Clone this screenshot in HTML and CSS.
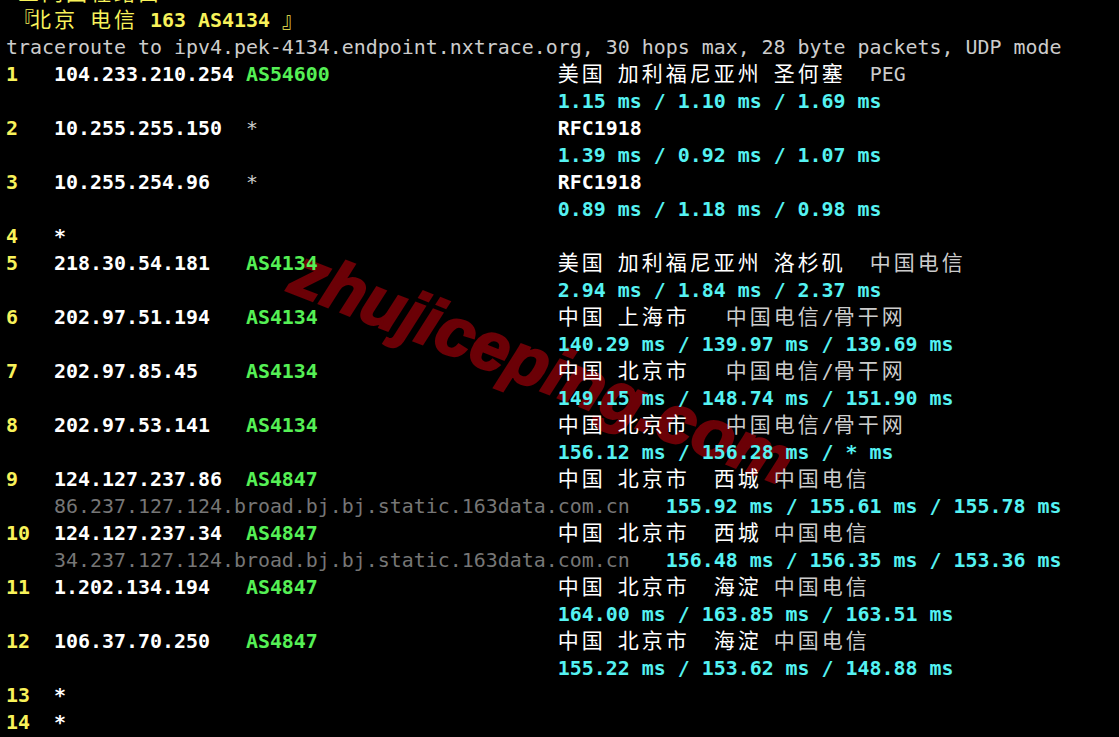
FILE: index.html
```html
<!DOCTYPE html>
<html lang="zh-CN">
<head>
<meta charset="utf-8">
<title>nexttrace</title>
<link rel="stylesheet" href="styles.css">
</head>
<body>
<div class="screen">
  <div class="mark">zhujiceping.com</div>
  <div class="term">
    <div class="ln"><span class="y"> <span class="z">三网回程路由</span></span></div>
    <div class="ln"><span class="y"><span class="z br">『</span><span class="z">北京</span> <span class="z">电信</span> 163 AS4134 <span class="z">』</span></span></div>
    <div class="ln"><span class="n">traceroute to ipv4.pek-4134.endpoint.nxtrace.org, 30 hops max, 28 byte packets, UDP mode</span></div>
    <div class="ln"><span class="y">1   </span><span class="w">104.233.210.254 </span><span class="g">AS54600</span>                   <span class="w"><span class="z">美国</span> <span class="z">加利福尼亚州</span> <span class="z">圣何塞</span></span><span class="n">  PEG</span></div>
    <div class="ln">                                              <span class="c">1.15 ms / 1.10 ms / 1.69 ms</span></div>
    <div class="ln"><span class="y">2   </span><span class="w">10.255.255.150  </span><span class="n">*</span>                         <span class="w">RFC1918</span></div>
    <div class="ln">                                              <span class="c">1.39 ms / 0.92 ms / 1.07 ms</span></div>
    <div class="ln"><span class="y">3   </span><span class="w">10.255.254.96   </span><span class="n">*</span>                         <span class="w">RFC1918</span></div>
    <div class="ln">                                              <span class="c">0.89 ms / 1.18 ms / 0.98 ms</span></div>
    <div class="ln"><span class="y">4   </span><span class="w">*</span></div>
    <div class="ln"><span class="y">5   </span><span class="w">218.30.54.181   </span><span class="g">AS4134</span>                    <span class="w"><span class="z">美国</span> <span class="z">加利福尼亚州</span> <span class="z">洛杉矶</span></span>  <span class="n"><span class="z">中国电信</span></span></div>
    <div class="ln">                                              <span class="c">2.94 ms / 1.84 ms / 2.37 ms</span></div>
    <div class="ln"><span class="y">6   </span><span class="w">202.97.51.194   </span><span class="g">AS4134</span>                    <span class="w"><span class="z">中国</span> <span class="z">上海市</span></span>   <span class="n"><span class="z">中国电信</span>/<span class="z">骨干网</span></span></div>
    <div class="ln">                                              <span class="c">140.29 ms / 139.97 ms / 139.69 ms</span></div>
    <div class="ln"><span class="y">7   </span><span class="w">202.97.85.45    </span><span class="g">AS4134</span>                    <span class="w"><span class="z">中国</span> <span class="z">北京市</span></span>   <span class="n"><span class="z">中国电信</span>/<span class="z">骨干网</span></span></div>
    <div class="ln">                                              <span class="c">149.15 ms / 148.74 ms / 151.90 ms</span></div>
    <div class="ln"><span class="y">8   </span><span class="w">202.97.53.141   </span><span class="g">AS4134</span>                    <span class="w"><span class="z">中国</span> <span class="z">北京市</span></span>   <span class="n"><span class="z">中国电信</span>/<span class="z">骨干网</span></span></div>
    <div class="ln">                                              <span class="c">156.12 ms / 156.28 ms / * ms</span></div>
    <div class="ln"><span class="y">9   </span><span class="w">124.127.237.86  </span><span class="g">AS4847</span>                    <span class="w"><span class="z">中国</span> <span class="z">北京市</span>  <span class="z">西城</span></span> <span class="n"><span class="z">中国电信</span></span></div>
    <div class="ln">    <span class="d">86.237.127.124.broad.bj.bj.static.163data.com.cn</span>   <span class="c">155.92 ms / 155.61 ms / 155.78 ms</span></div>
    <div class="ln"><span class="y">10  </span><span class="w">124.127.237.34  </span><span class="g">AS4847</span>                    <span class="w"><span class="z">中国</span> <span class="z">北京市</span>  <span class="z">西城</span></span> <span class="n"><span class="z">中国电信</span></span></div>
    <div class="ln">    <span class="d">34.237.127.124.broad.bj.bj.static.163data.com.cn</span>   <span class="c">156.48 ms / 156.35 ms / 153.36 ms</span></div>
    <div class="ln"><span class="y">11  </span><span class="w">1.202.134.194   </span><span class="g">AS4847</span>                    <span class="w"><span class="z">中国</span> <span class="z">北京市</span>  <span class="z">海淀</span></span> <span class="n"><span class="z">中国电信</span></span></div>
    <div class="ln">                                              <span class="c">164.00 ms / 163.85 ms / 163.51 ms</span></div>
    <div class="ln"><span class="y">12  </span><span class="w">106.37.70.250   </span><span class="g">AS4847</span>                    <span class="w"><span class="z">中国</span> <span class="z">北京市</span>  <span class="z">海淀</span></span> <span class="n"><span class="z">中国电信</span></span></div>
    <div class="ln">                                              <span class="c">155.22 ms / 153.62 ms / 148.88 ms</span></div>
    <div class="ln"><span class="y">13  </span><span class="w">*</span></div>
    <div class="ln"><span class="y">14  </span><span class="w">*</span></div>
  </div>
</div>
</body>
</html>
```

FILE: styles.css
```css
html, body {
  margin: 0;
  padding: 0;
  background: #000000;
}

.screen {
  position: relative;
  width: 1119px;
  height: 737px;
  overflow: hidden;
  background: #000000;
}

.mark {
  position: absolute;
  left: 294px;
  top: 234px;
  z-index: 0;
  font-family: "Liberation Sans", Arial, sans-serif;
  font-weight: 700;
  font-style: italic;
  font-size: 68px;
  line-height: 1;
  color: #6b0006;
  -webkit-text-stroke: 2.5px #6b0006;
  white-space: nowrap;
  transform: rotate(21.5deg);
  transform-origin: 0 37px;
}

.term {
  position: relative;
  z-index: 1;
  margin-top: -20px;
  padding-left: 6px;
  font-family: "DejaVu Sans Mono", "Noto Sans CJK SC", monospace;
  font-size: 19.93px;
  line-height: 27px;
  color: #cccccc;
}

.ln {
  height: 27px;
  white-space: pre;
}

.y { color: #f8f25a; font-weight: 700; }
.w { color: #ffffff; font-weight: 700; }
.g { color: #55f055; font-weight: 700; }
.c { color: #55f2f2; font-weight: 700; }
.n { color: #cccccc; font-weight: 400; }
.d { color: #767676; font-weight: 400; }

.z {
  font-family: "Noto Sans CJK SC", sans-serif;
  font-weight: 400;
  font-size: 21px;
  letter-spacing: 3px;
  line-height: 1;
}

.br {
  display: inline-block;
  width: 17px;
  padding-left: 7px;
  letter-spacing: 0;
}
```
